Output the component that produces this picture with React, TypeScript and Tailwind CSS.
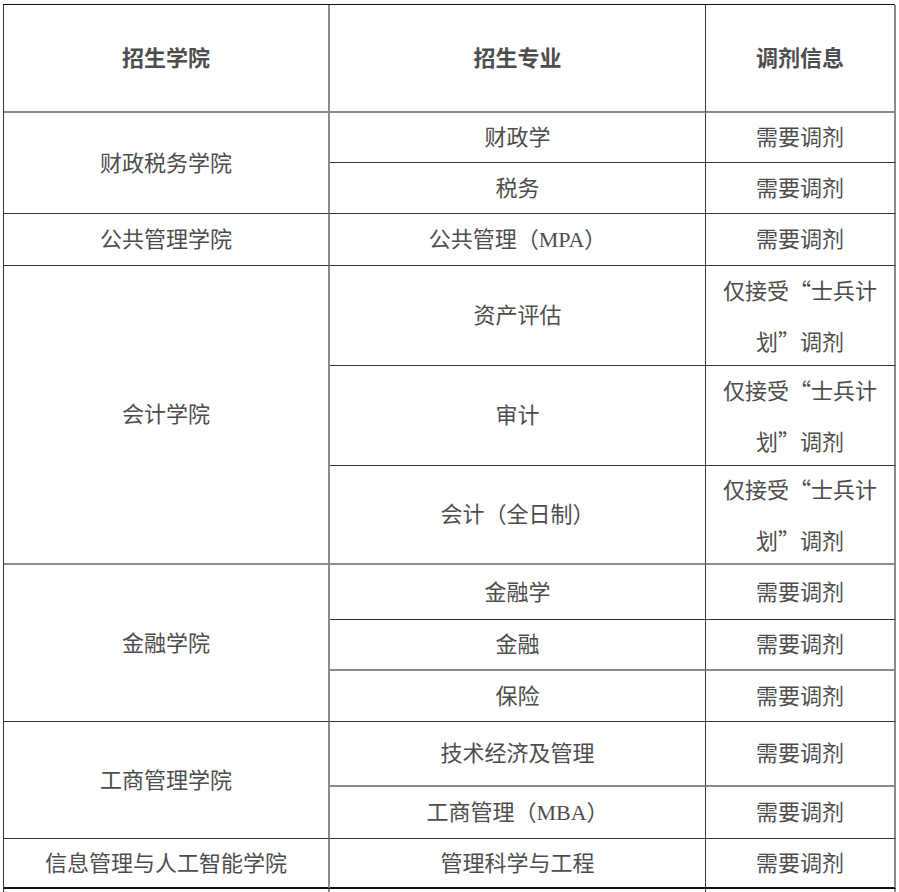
import React from 'react';

const FONT = 'font-["Liberation_Serif","Noto_Sans_CJK_SC",serif]';

type CellProps = {
  children?: React.ReactNode;
  className?: string;
};

function Cell({ children, className = '' }: CellProps) {
  return (
    <div className={`flex items-center justify-center text-center text-[22px] text-[#4d4d4d] ${className}`}>
      {children}
    </div>
  );
}

const dark = 'border-b border-b-[#333333]';
const gray = 'border-b-2 border-b-[#8a8a8a]';
const col1 = 'border-r-2 border-r-[#8a8a8a]';
const col2 = 'border-r-[1.5px] border-r-[#3a3a3a]';
const col3 = 'border-r-2 border-r-[#8a8a8a]';

// full-width quotes come from the CJK font, not Liberation
const Q = ({ c }: { c: string }) => <span className='font-["Noto_Sans_CJK_SC",sans-serif]'>{c}</span>;

function Soldier() {
  return (
    <span className="leading-[48px]">
      仅接受<Q c="“" />士兵计
      <br />
      划<Q c="”" />调剂
    </span>
  );
}

export default function App() {
  return (
    <div className={`min-h-screen bg-white pl-[3px] pt-[4px] ${FONT}`}>
      <div className="grid w-[892px] grid-cols-[326px_376px_190px] grid-rows-[108px_50px_51px_52px_100px_100px_99px_55px_51px_51px_65px_52px_50px_40px] border-l border-t border-l-[#333333] border-t-[#111111]">
        {/* header */}
        <Cell className={`${col1} ${gray} font-bold text-[#1f1f1f]`}>招生学院</Cell>
        <Cell className={`${col2} ${gray} font-bold text-[#1f1f1f]`}>招生专业</Cell>
        <Cell className={`${col3} ${gray} font-bold text-[#1f1f1f]`}>调剂信息</Cell>

        {/* 财政税务学院 */}
        <Cell className={`${col1} ${dark} row-span-2`}>财政税务学院</Cell>
        <Cell className={`${col2} ${dark}`}>财政学</Cell>
        <Cell className={`${col3} ${dark}`}>需要调剂</Cell>
        <Cell className={`${col2} ${dark}`}>税务</Cell>
        <Cell className={`${col3} ${dark}`}>需要调剂</Cell>

        {/* 公共管理学院 */}
        <Cell className={`${col1} ${dark}`}>公共管理学院</Cell>
        <Cell className={`${col2} ${dark}`}>公共管理（MPA）</Cell>
        <Cell className={`${col3} ${dark}`}>需要调剂</Cell>

        {/* 会计学院 */}
        <Cell className={`${col1} ${gray} row-span-3`}>会计学院</Cell>
        <Cell className={`${col2} ${dark}`}>资产评估</Cell>
        <Cell className={`${col3} ${dark}`}>
          <Soldier />
        </Cell>
        <Cell className={`${col2} ${dark}`}>审计</Cell>
        <Cell className={`${col3} ${dark}`}>
          <Soldier />
        </Cell>
        <Cell className={`${col2} ${gray}`}>会计（全日制）</Cell>
        <Cell className={`${col3} ${gray}`}>
          <Soldier />
        </Cell>

        {/* 金融学院 */}
        <Cell className={`${col1} ${dark} row-span-3`}>金融学院</Cell>
        <Cell className={`${col2} ${dark}`}>金融学</Cell>
        <Cell className={`${col3} ${dark}`}>需要调剂</Cell>
        <Cell className={`${col2} ${gray}`}>金融</Cell>
        <Cell className={`${col3} ${gray}`}>需要调剂</Cell>
        <Cell className={`${col2} ${dark}`}>保险</Cell>
        <Cell className={`${col3} ${dark}`}>需要调剂</Cell>

        {/* 工商管理学院 */}
        <Cell className={`${col1} ${dark} row-span-2`}>工商管理学院</Cell>
        <Cell className={`${col2} ${gray}`}>技术经济及管理</Cell>
        <Cell className={`${col3} ${gray}`}>需要调剂</Cell>
        <Cell className={`${col2} ${dark}`}>工商管理（MBA）</Cell>
        <Cell className={`${col3} ${dark}`}>需要调剂</Cell>

        {/* 信息管理与人工智能学院 */}
        <Cell className={`${col1} border-b-2 border-b-[#111111]`}>信息管理与人工智能学院</Cell>
        <Cell className={`${col2} border-b-2 border-b-[#111111]`}>管理科学与工程</Cell>
        <Cell className={`${col3} border-b-2 border-b-[#111111]`}>需要调剂</Cell>

        <Cell className={col1} />
        <Cell className={col2} />
        <Cell className={col3} />
      </div>
    </div>
  );
}
